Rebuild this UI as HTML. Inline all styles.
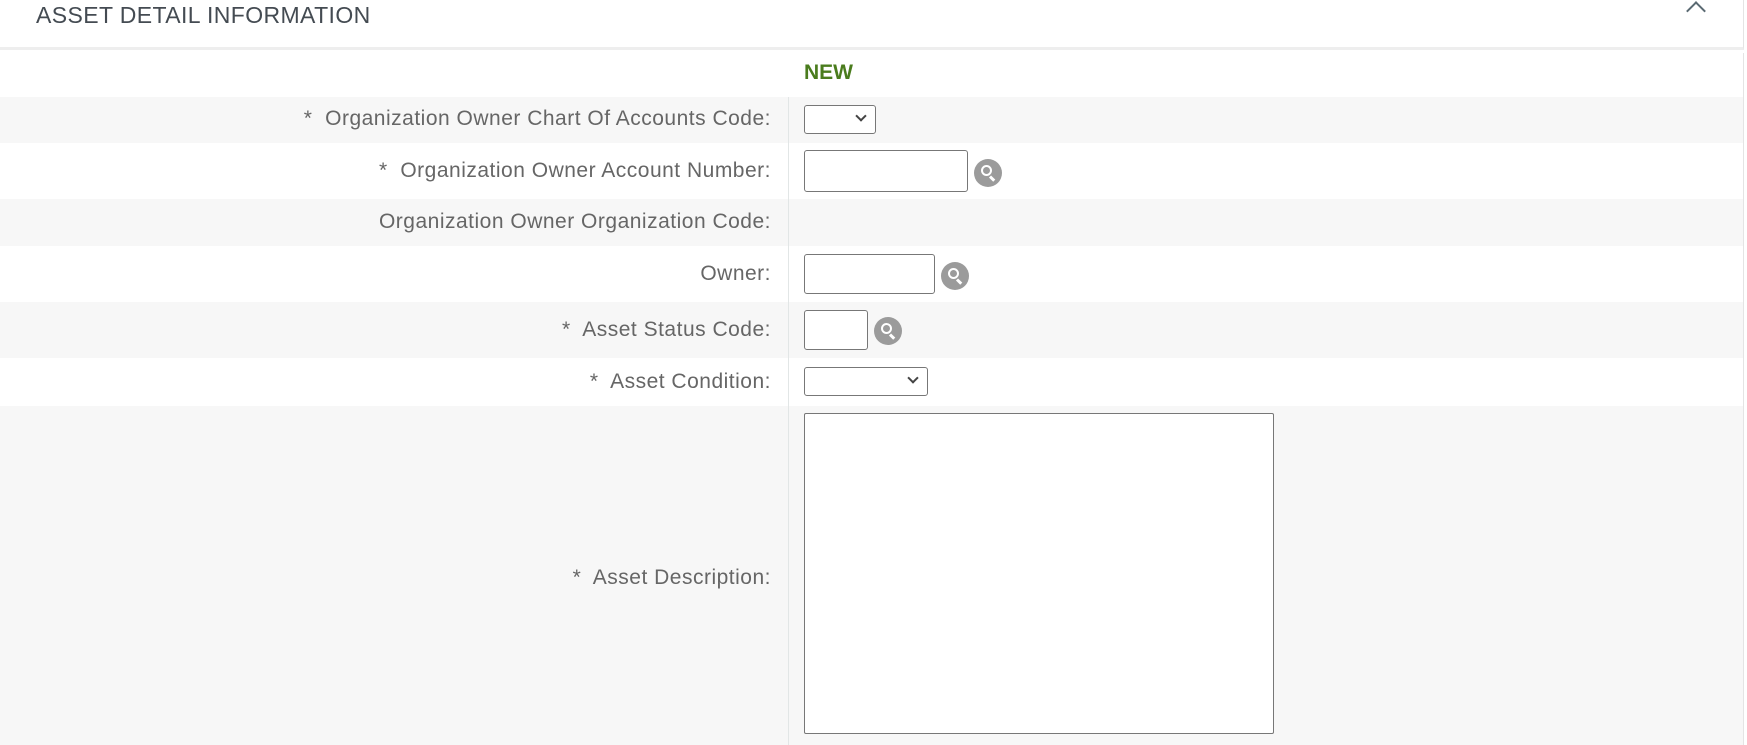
<!DOCTYPE html>
<html><head><style>
*{box-sizing:border-box;margin:0;padding:0}
body{width:1747px;height:745px;overflow:hidden;background:#fff;font-family:"Liberation Sans",Arial,sans-serif;position:relative}
.hdr{position:absolute;left:0;top:0;width:1744px;height:50px;border-bottom:3px solid #eee;border-right:1px solid #e4e4e4}
.hdr span{position:absolute;left:36px;top:2px;font-size:23px;color:#444b52;letter-spacing:.4px}
.row{position:absolute;left:0;width:1744px;border-right:1px solid #e4e4e4}
.g{background:#f7f7f7}
.lab{position:absolute;right:calc(1744px - 772px);font-size:21px;letter-spacing:.5px;color:#666;white-space:nowrap}
.div{position:absolute;left:788px;top:97px;width:1px;height:648px;background:#e2e6e6}
.box{position:absolute;left:804px;border:1px solid #777;border-radius:3px;background:#fff}
.ic{position:absolute;width:28px;height:28px;border-radius:50%;background:#9b9b9b}
.ic:before{content:"";position:absolute;left:7px;top:6px;width:11px;height:11px;border:2.5px solid #fff;border-radius:50%;box-sizing:border-box}
.ic:after{content:"";position:absolute;left:16px;top:16px;width:6px;height:3px;background:#fff;transform:rotate(45deg);transform-origin:left center}
.chev{position:absolute;width:8px;height:8px;border-right:2px solid #444;border-bottom:2px solid #444;transform:rotate(45deg)}
</style></head><body>
<div class="hdr"><span>ASSET DETAIL INFORMATION</span>
<div style="position:absolute;left:1689px;top:4px;width:14px;height:14px;border-left:2.5px solid #5a6a72;border-top:2.5px solid #5a6a72;transform:rotate(45deg)"></div></div>
<div class="row" style="top:53px;height:44px"><span style="position:absolute;left:804px;top:8px;font-size:21px;font-weight:bold;color:#4a7c1d">NEW</span></div>
<div class="row g" style="top:97px;height:46px"><span class="lab" style="top:10px">*&nbsp; Organization Owner Chart Of Accounts Code:</span></div>
<div class="row" style="top:143px;height:56px"><span class="lab" style="top:16px">*&nbsp; Organization Owner Account Number:</span></div>
<div class="row g" style="top:199px;height:47px"><span class="lab" style="top:11px">Organization Owner Organization Code:</span></div>
<div class="row" style="top:246px;height:56px"><span class="lab" style="top:16px">Owner:</span></div>
<div class="row g" style="top:302px;height:56px"><span class="lab" style="top:16px">*&nbsp; Asset Status Code:</span></div>
<div class="row" style="top:358px;height:48px"><span class="lab" style="top:12px">*&nbsp; Asset Condition:</span></div>
<div class="row g" style="top:406px;height:339px"><span class="lab" style="top:160px">*&nbsp; Asset Description:</span></div>
<div class="div"></div>
<div class="box" style="top:105px;width:72px;height:29px"><div class="chev" style="left:52px;top:6px"></div></div>
<div class="box" style="top:150px;width:164px;height:42px"></div><div class="ic" style="left:974px;top:159px"></div>
<div class="box" style="top:254px;width:131px;height:40px"></div><div class="ic" style="left:941px;top:262px"></div>
<div class="box" style="top:310px;width:64px;height:40px"></div><div class="ic" style="left:874px;top:317px"></div>
<div class="box" style="top:367px;width:124px;height:29px"><div class="chev" style="left:104px;top:6px"></div></div>
<div class="box" style="top:413px;width:470px;height:321px;border-radius:2px"></div>
</body></html>
